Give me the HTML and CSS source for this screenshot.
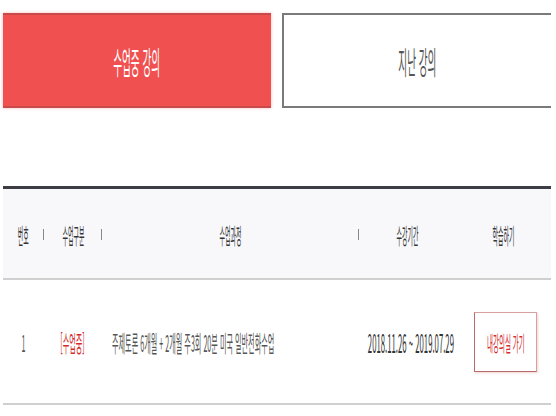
FILE: index.html
```html
<!DOCTYPE html>
<html lang="ko">
<head>
    <meta charset="UTF-8">
    <meta name="viewport" content="width=device-width, initial-scale=1.0">
    <title>나의 강의실</title>
    <link rel="stylesheet" href="styles.css">
</head>
<body>

    <div id="wrap">
        <div class="tabs">
            <a class="tab tab-on"><span class="sq">수업중 강의</span></a>
            <a class="tab"><span class="sq">지난 강의</span></a>
        </div>

        <div class="list">
            <div class="list-head">
                <div class="cell sep"><span class="sq">번호</span></div>
                <div class="cell sep"><span class="sq">수업구분</span></div>
                <div class="cell sep"><span class="sq">수업과정</span></div>
                <div class="cell"><span class="sq">수강기간</span></div>
                <div class="cell"><span class="sq">학습하기</span></div>
            </div>
            <div class="list-row">
                <div class="cell"><span class="sq">1</span></div>
                <div class="cell"><span class="sq status">[수업중]</span></div>
                <div class="cell cell-left"><span class="sq sq-left">주제토론 6개월 + 2개월 주3회 20분 미국 일반전화수업</span></div>
                <div class="cell"><span class="sq date">2018.11.26 ~ 2019.07.29</span></div>
                <div class="cell cell-btn">
                    <a class="btn-room"><span class="sq">내강의실 가기</span></a>
                </div>
            </div>
        </div>
    </div>

</body>
</html>
```

FILE: styles.css
```css
body {
    margin: 0;
    padding: 0;
    background: #fff;
    font-family: "Noto Sans CJK KR", "Noto Sans", sans-serif;
    color: #333;
}

#wrap {
    width: 548px;
    padding: 13px 0 0 3px;
}

/* 글자가 가로로 눌린 모양 */
.sq {
    display: inline-block;
    white-space: nowrap;
    transform: scaleX(0.31);
    transform-origin: center;
}

.sq-left {
    transform-origin: left center;
}

.tabs {
    display: flex;
    gap: 11px;
}

.tab {
    flex: 1;
    height: 95px;
    display: flex;
    align-items: center;
    justify-content: center;
    font-size: 31px;
    color: #555;
    background: #fff;
    border: 2px solid #7a7a7a;
    border-right: none;
    box-sizing: border-box;
    cursor: pointer;
}

.tab-on {
    flex: 0 0 268px;
    background: #f05050;
    color: #fff;
    border: none;
    border-top: 2px solid #c94a4a;
    border-bottom: 2px solid #c94a4a;
    box-shadow: 0 0 3px rgba(240, 80, 80, 0.4);
}

.list {
    margin-top: 78px;
    border-top: 3px solid #3d3d45;
}

.list-head,
.list-row {
    display: grid;
    grid-template-columns: 41px 58px 257px 96px 96px;
}

.list-head {
    height: 89px;
    background: #f8f8fb;
    border-bottom: 2px solid #cfcfcf;
    font-size: 22px;
    color: #333;
}

.list-head .sq {
    transform: scaleX(0.27);
}

.list-row {
    height: 123px;
    border-bottom: 2px solid #cfcfcf;
    font-size: 23px;
    color: #555;
}

.cell {
    position: relative;
    min-width: 0;
    display: flex;
    align-items: center;
    justify-content: center;
}

.cell-left {
    justify-content: flex-start;
    padding-left: 10px;
}

.sep::after {
    content: "";
    position: absolute;
    right: 0;
    top: 50%;
    width: 1px;
    height: 11px;
    margin-top: -5px;
    background: #888;
}

.status {
    color: #d42a2a;
}

.date {
    font-size: 25px;
    color: #333;
    margin-left: 8px;
}

.cell-btn {
    padding-left: 5px;
}

.btn-room {
    width: 63px;
    height: 60px;
    display: flex;
    align-items: center;
    justify-content: center;
    box-sizing: border-box;
    border: 1px solid #d8a0a0;
    border-left-color: #b86c6c;
    border-bottom-color: #b86c6c;
    box-shadow: 1px 1px 2px rgba(200, 80, 80, 0.25);
    background: #fff;
    color: #d42a2a;
    font-size: 21px;
    cursor: pointer;
}
```
